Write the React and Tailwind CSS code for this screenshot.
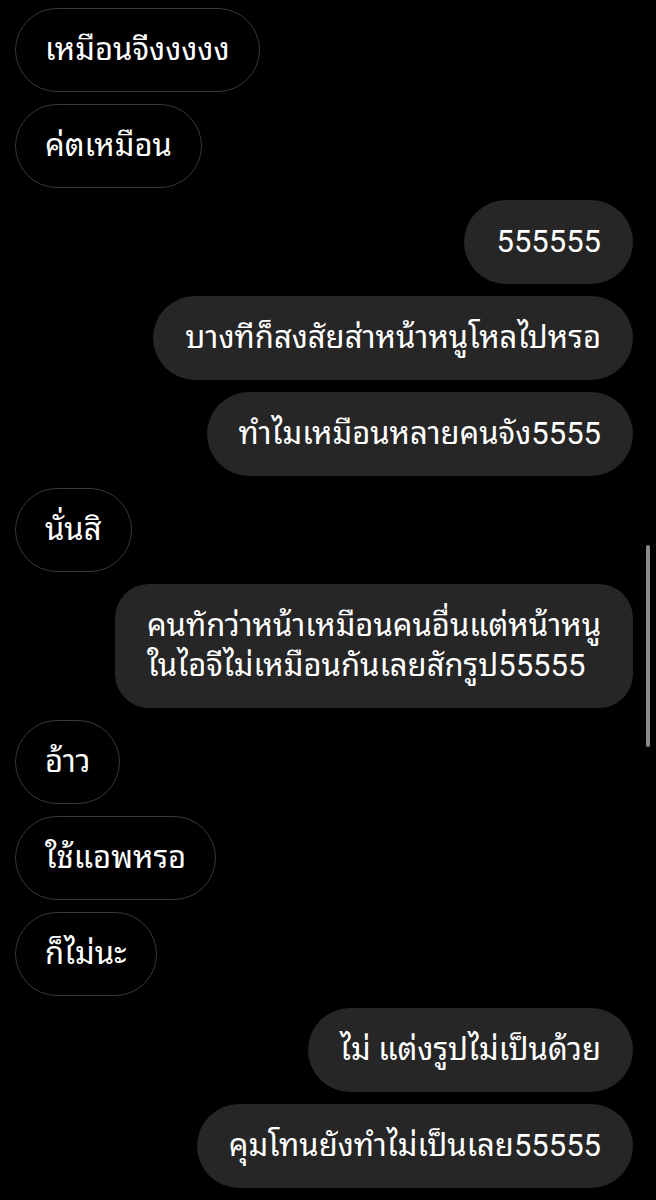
import React from 'react';

const messages = [
  { me: false, text: 'เหมือนจีงงงงง' },
  { me: false, text: 'ค่ตเหมือน' },
  { me: true, text: '555555' },
  { me: true, text: 'บางทีก็สงสัยส่าหน้าหนูโหลไปหรอ' },
  { me: true, text: 'ทำไมเหมือนหลายคนจัง5555' },
  { me: false, text: 'นั่นสิ' },
  { me: true, lines: ['คนทักว่าหน้าเหมือนคนอื่นแต่หน้าหนู', 'ในไอจีไม่เหมือนกันเลยสักรูป55555'] },
  { me: false, text: 'อ้าว' },
  { me: false, text: 'ใช้แอพหรอ' },
  { me: false, text: 'ก็ไม่นะ' },
  { me: true, text: 'ไม่ แต่งรูปไม่เป็นด้วย' },
  { me: true, text: 'คุมโทนยังทำไม่เป็นเลย55555' },
];

const Bubble = ({ msg }) => {
  if (msg.lines) {
    return (
      <div className="flex justify-end">
        <div className="bg-[#262626] rounded-[34px] px-8 py-[22px] text-[31px] leading-[40px] text-white">
          {msg.lines.map((l, i) => <div key={i}>{l}</div>)}
        </div>
      </div>
    );
  }
  return (
    <div className={`flex ${msg.me ? 'justify-end' : 'justify-start'}`}>
      <div
        className={`
          h-[84px] flex items-center rounded-full text-[31px] leading-[40px] text-white whitespace-nowrap
          ${msg.me ? 'bg-[#262626] px-8' : 'border-[1.5px] border-[#383838] px-[29px]'}
        `}
      >
        {msg.text}
      </div>
    </div>
  );
};

export default function App() {
  return (
    <div className="relative w-[656px] h-[1200px] bg-black overflow-hidden font-['Roboto','Noto_Sans_Thai_Looped','Loma','Garuda','Tlwg_Typo','Sawasdee','Noto_Sans_Thai',sans-serif]">
      <div className="flex flex-col gap-3 pt-2 pl-[15px] pr-[23px]">
        {messages.map((m, i) => <Bubble key={i} msg={m} />)}
      </div>
      <div className="absolute right-[6px] top-[545px] h-[202px] w-[4px] rounded-full bg-[#8a8a8a]" />
    </div>
  );
}
